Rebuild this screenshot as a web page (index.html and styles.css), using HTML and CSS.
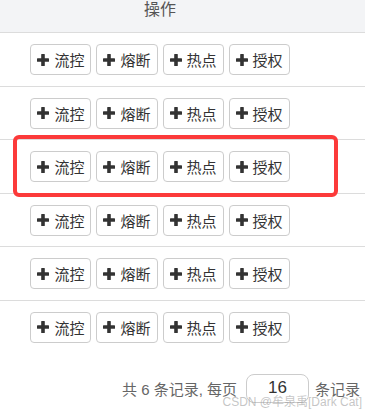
FILE: index.html
```html
<!DOCTYPE html>
<html>
<head>
    <title>操作</title>
    <link rel="stylesheet" href="styles.css">
</head>
<body>
    <div class="panel">
        <table class="rule-table">
            <thead>
                <tr>
                    <th class="col-ops">操作</th>
                    <th class="col-rest"></th>
                </tr>
            </thead>
            <tbody id="rows"></tbody>
        </table>

        <!-- highlighted row annotation -->
        <div class="highlight"></div>

        <div class="pager">
            <span>共 6 条记录, 每页</span>
            <input class="page-size" type="text" value="16">
            <span>条记录</span>
        </div>

        <div class="watermark">CSDN @牟泉禹[Dark Cat]</div>
    </div>

    <script>
        const actions = ['流控', '熔断', '热点', '授权'];
        const plusIcon = '<svg class="plus" width="12" height="12" viewBox="0 0 12 12"><rect x="4.2" y="0" width="3.6" height="12" rx="0.6"/><rect x="0" y="4.2" width="12" height="3.6" rx="0.6"/></svg>';
        const rows = document.getElementById('rows');

        for (let i = 0; i < 6; i++) {
            const tr = document.createElement('tr');
            const buttons = actions.map(a => `<button class="btn">${plusIcon}<span>${a}</span></button>`).join('');
            tr.innerHTML = `<td class="col-ops"><div class="btn-group">${buttons}</div></td><td class="col-rest"></td>`;
            rows.appendChild(tr);
        }
    </script>
</body>
</html>
```

FILE: styles.css
```css
body, html {
    margin: 0;
    background: #fff;
    font-family: 'Liberation Sans', 'Noto Sans CJK SC', sans-serif;
    color: #333;
}

.panel {
    position: relative;
    width: 365px;
    height: 410px;
    overflow: hidden;
}

.rule-table {
    width: 100%;
    border-collapse: collapse;
}

.rule-table th {
    background-color: #f3f4f6;
    color: #555;
    font-size: 16px;
    font-weight: normal;
    line-height: 16px;
    padding: 2px 0 14px;
    border-bottom: 1px solid #dcdcdc;
    text-align: center;
}

.col-ops {
    width: 320px;
}

.rule-table td {
    border-top: 1px solid #dcdcdc;
    padding: 11px 0 10.6px;
    text-align: center;
}

.rule-table tbody tr:first-child td {
    border-top: none;
}

.btn-group {
    display: flex;
    justify-content: center;
    gap: 5px;
}

.btn {
    display: inline-flex;
    align-items: center;
    gap: 5px;
    height: 31px;
    padding: 0 6px;
    border: 1px solid #ccc;
    border-radius: 4px;
    background: #fff;
    color: #333;
    font-family: 'Liberation Sans', 'Noto Sans CJK SC', sans-serif;
    font-size: 15px;
    box-sizing: border-box;
}

.plus {
    fill: #333;
    flex: none;
}

.highlight {
    position: absolute;
    left: 13px;
    top: 135px;
    width: 325px;
    height: 62px;
    border: 4px solid #fc3a3a;
    border-radius: 6px;
    box-sizing: border-box;
}

.pager {
    display: flex;
    justify-content: flex-end;
    align-items: center;
    margin-top: 20px;
    padding-right: 5px;
    font-size: 15px;
    color: #666;
}

.page-size {
    width: 63px;
    height: 29px;
    margin: 0 6px 0 9px;
    padding: 0;
    border: 1px solid #ccc;
    border-radius: 8px;
    box-sizing: border-box;
    text-align: center;
    font-family: 'Liberation Sans', sans-serif;
    font-size: 17px;
    color: #333;
}

.watermark {
    position: absolute;
    right: 3px;
    bottom: 1px;
    font-size: 12px;
    color: rgba(140, 140, 140, 0.5);
}
```
